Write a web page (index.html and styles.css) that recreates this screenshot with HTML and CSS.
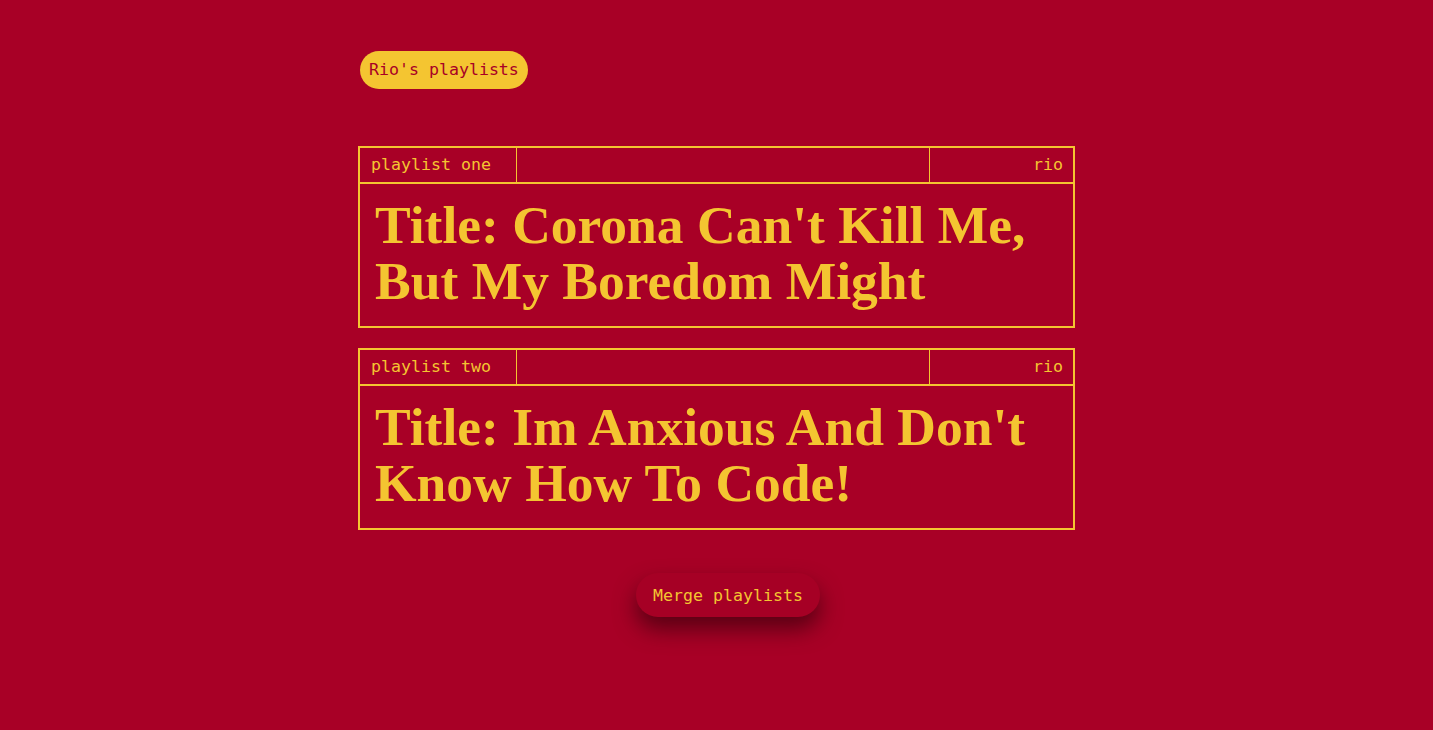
FILE: index.html
```html
<!DOCTYPE html>
<html>
<head>
<meta charset="utf-8">
<link rel="stylesheet" href="styles.css">
</head>
<body>
<main class="page">
  <div class="badge">Rio's playlists</div>
  <section class="list">
    <article class="card">
      <div class="card-head">
        <span class="cell name">playlist one</span>
        <span class="cell spacer"></span>
        <span class="cell owner">rio</span>
      </div>
      <h2 class="title">Title: Corona Can't Kill Me, But My Boredom Might</h2>
    </article>
    <article class="card">
      <div class="card-head">
        <span class="cell name">playlist two</span>
        <span class="cell spacer"></span>
        <span class="cell owner">rio</span>
      </div>
      <h2 class="title">Title: Im Anxious And Don't Know How To Code!</h2>
    </article>
  </section>
  <div class="actions">
    <button class="merge">Merge playlists</button>
  </div>
</main>
</body>
</html>
```
FILE: styles.css
```css
html, body {
  margin: 0;
  padding: 0;
  background: #a80026;
  height: 100%;
}
body {
  font-family: "DejaVu Sans Mono", "Liberation Mono", monospace;
  color: #f4c531;
}
.page {
  width: 717px;
  margin: 0 auto;
  padding-top: 51px;
}
.badge {
  display: inline-block;
  margin-left: 2px;
  background: #f4c531;
  color: #a80026;
  font-size: 16.6px;
  line-height: 38px;
  height: 38px;
  padding: 0 9px;
  border-radius: 19px;
}
.list {
  margin-top: 57px;
  display: flex;
  flex-direction: column;
  gap: 20px;
}
.card {
  border: 2px solid #f4c531;
}
.card-head {
  display: flex;
  height: 34px;
  border-bottom: 2px solid #f4c531;
}
.cell {
  font-size: 16.6px;
  line-height: 34px;
}
.name {
  box-sizing: border-box;
  width: 157px;
  padding-left: 11px;
  border-right: 1px solid #f4c531;
}
.spacer {
  flex: 1;
  border-right: 1px solid #f4c531;
}
.owner {
  box-sizing: border-box;
  width: 143px;
  padding-right: 10px;
  text-align: right;
}
.title {
  margin: 0;
  padding: 13px 15px 17px;
  font-family: "Liberation Serif", "DejaVu Serif", serif;
  font-weight: bold;
  font-size: 53.5px;
  line-height: 56px;
}
.actions {
  display: flex;
  justify-content: center;
  margin-top: 43px;
  padding-left: 23px;
}
.merge {
  font-family: "DejaVu Sans Mono", "Liberation Mono", monospace;
  font-size: 16.6px;
  color: #f4c531;
  background: #a60025;
  border: none;
  height: 44px;
  width: 184px;
  padding: 0;
  border-radius: 22px;
  box-shadow: 0 12px 22px rgba(55, 0, 12, 0.7);
}
```
